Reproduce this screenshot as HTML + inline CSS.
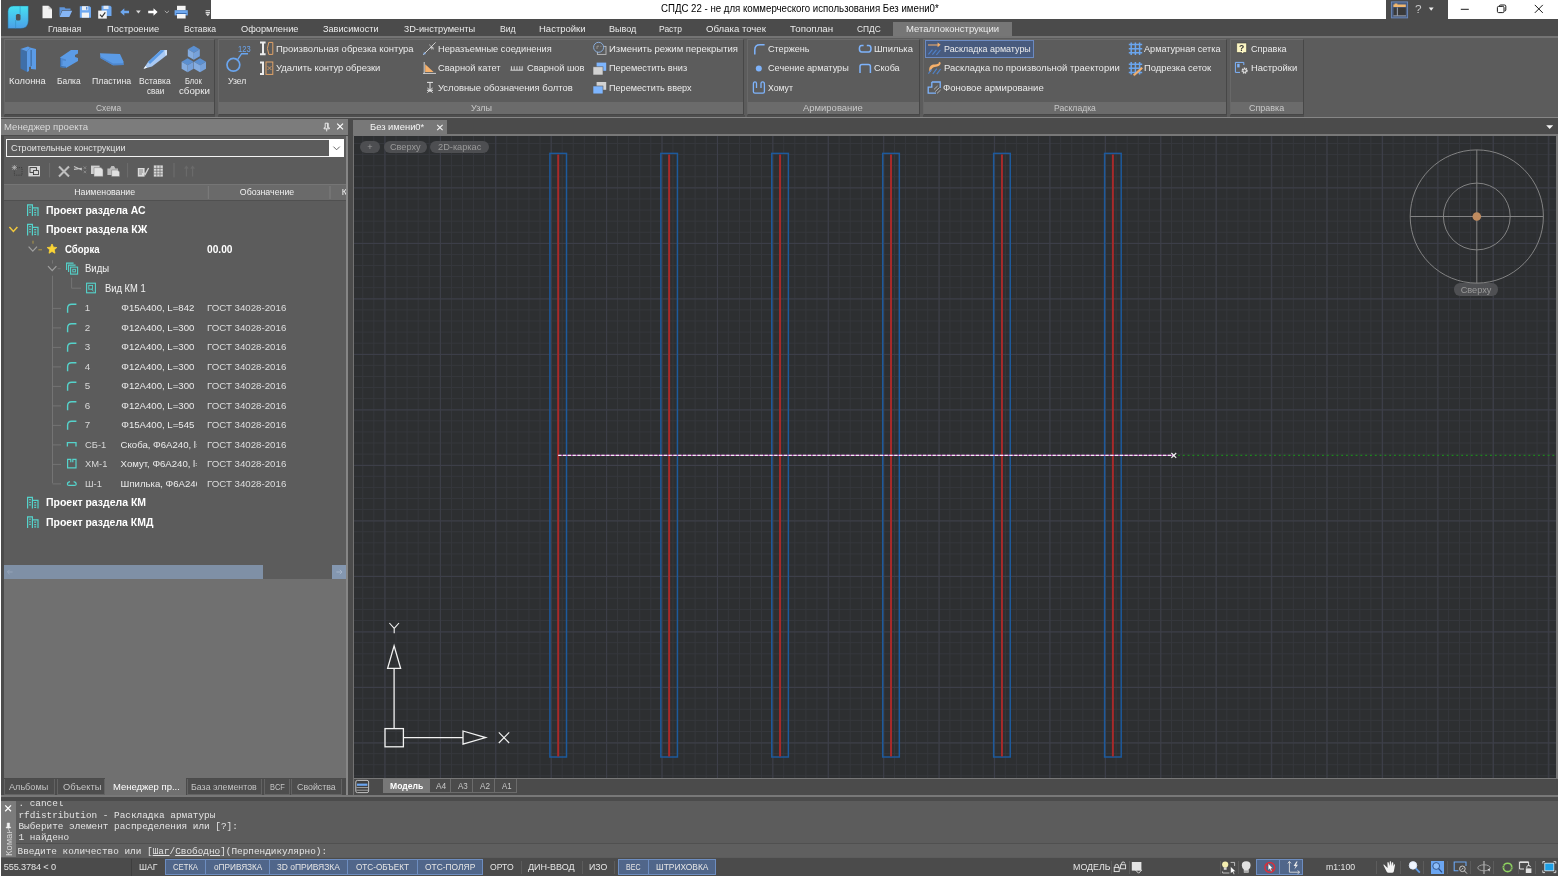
<!DOCTYPE html><html><head><meta charset="utf-8"><title>СПДС 22</title><style>
*{box-sizing:border-box;margin:0;padding:0}
html,body{width:1560px;height:877px;overflow:hidden;background:#fff}
body{position:relative;font-family:"Liberation Sans",sans-serif;font-size:9.5px;color:#e6e6e6}
.a{position:absolute}
.t{position:absolute;white-space:pre;line-height:12px;height:12px}
.c{text-align:center}
.rb{color:#e8e8e8;font-size:9.5px}
.pl{color:#b9b9b9;font-size:9.5px}
.tr{color:#ececec;font-size:9.7px}
.trb{color:#fff;font-size:10.5px;font-weight:bold}
.mono{font-family:"Liberation Mono",monospace;font-size:9.4px;color:#e4e4e4}
.st{color:#e8e8e8;font-size:9.2px}
svg{position:absolute;overflow:visible}
</style></head><body><div id="app" style="position:absolute;left:0;top:0;width:1560px;height:877px;will-change:transform;"><div class="a" style="left:1px;top:0px;width:1557px;height:876px;background:#4b4b4b;"></div>
<div class="a" style="left:211.2px;top:0px;width:1175.1px;height:19.4px;background:#fff;"></div>
<div class="a" style="left:1447.8px;top:0px;width:112.2px;height:19.4px;background:#fff;"></div>
<div class="t " style="left:661px;top:2.5999999999999996px;color:#000;font-size:10.4px;transform-origin:0 50%;transform:scaleX(0.9296);">СПДС 22 - не для коммерческого использования Без имени0*</div>
<div class="a" style="left:893px;top:22.2px;width:119px;height:14.5px;background:#767676;"></div>
<div class="t " style="left:48.3px;top:23.3px;color:#ebebeb;font-size:9.4px;transform-origin:0 50%;transform:scaleX(0.9335);">Главная</div>
<div class="t " style="left:106.7px;top:23.3px;color:#ebebeb;font-size:9.4px;transform-origin:0 50%;transform:scaleX(0.9992);">Построение</div>
<div class="t " style="left:184px;top:23.3px;color:#ebebeb;font-size:9.4px;transform-origin:0 50%;transform:scaleX(0.9159);">Вставка</div>
<div class="t " style="left:240.7px;top:23.3px;color:#ebebeb;font-size:9.4px;transform-origin:0 50%;transform:scaleX(0.9872);">Оформление</div>
<div class="t " style="left:323.3px;top:23.3px;color:#ebebeb;font-size:9.4px;transform-origin:0 50%;transform:scaleX(0.9764);">Зависимости</div>
<div class="t " style="left:404.3px;top:23.3px;color:#ebebeb;font-size:9.4px;transform-origin:0 50%;transform:scaleX(0.9882);">3D-инструменты</div>
<div class="t " style="left:500px;top:23.3px;color:#ebebeb;font-size:9.4px;transform-origin:0 50%;transform:scaleX(0.9232);">Вид</div>
<div class="t " style="left:539px;top:23.3px;color:#ebebeb;font-size:9.4px;transform-origin:0 50%;transform:scaleX(1.0132);">Настройки</div>
<div class="t " style="left:609.3px;top:23.3px;color:#ebebeb;font-size:9.4px;transform-origin:0 50%;transform:scaleX(0.9641);">Вывод</div>
<div class="t " style="left:659.3px;top:23.3px;color:#ebebeb;font-size:9.4px;transform-origin:0 50%;transform:scaleX(0.9048);">Растр</div>
<div class="t " style="left:706px;top:23.3px;color:#ebebeb;font-size:9.4px;transform-origin:0 50%;transform:scaleX(1.0238);">Облака точек</div>
<div class="t " style="left:790px;top:23.3px;color:#ebebeb;font-size:9.4px;transform-origin:0 50%;transform:scaleX(1.0422);">Топоплан</div>
<div class="t " style="left:857.3px;top:23.3px;color:#ebebeb;font-size:9.4px;transform-origin:0 50%;transform:scaleX(0.8877);">СПДС</div>
<div class="t " style="left:905.7px;top:23.3px;color:#ebebeb;font-size:9.4px;transform-origin:0 50%;transform:scaleX(1.0136);">Металлоконструкции</div>
<div class="a" style="left:1px;top:35.7px;width:1557px;height:2.3px;background:#747474;"></div>
<div class="a" style="left:1px;top:38px;width:1557px;height:78.7px;background:#5c5c5c;"></div>
<div class="a" style="left:3.5px;top:114.6px;width:211.6px;height:2.1px;background:#4e4e4e;"></div>
<div class="a" style="left:3.5px;top:39px;width:211.0px;height:75.6px;background:#5c5c5c;border:1px solid;border-color:#6b6b6b #474747 #474747 #686868;"></div>
<div class="a" style="left:4.5px;top:102px;width:209.0px;height:11.6px;background:#6b6b6b;"></div>
<div class="t " style="left:96.2px;top:102.3px;color:#c8c8c8;font-size:9.4px;transform-origin:0 50%;transform:scaleX(0.8940);">Схема</div>
<div class="a" style="left:217.5px;top:114.6px;width:527.1px;height:2.1px;background:#4e4e4e;"></div>
<div class="a" style="left:217.5px;top:39px;width:526.5px;height:75.6px;background:#5c5c5c;border:1px solid;border-color:#6b6b6b #474747 #474747 #686868;"></div>
<div class="a" style="left:218.5px;top:102px;width:524.5px;height:11.6px;background:#6b6b6b;"></div>
<div class="t " style="left:470.7px;top:102.3px;color:#c8c8c8;font-size:9.4px;transform-origin:0 50%;transform:scaleX(0.9594);">Узлы</div>
<div class="a" style="left:747px;top:114.6px;width:173.1px;height:2.1px;background:#4e4e4e;"></div>
<div class="a" style="left:747px;top:39px;width:172.5px;height:75.6px;background:#5c5c5c;border:1px solid;border-color:#6b6b6b #474747 #474747 #686868;"></div>
<div class="a" style="left:748px;top:102px;width:170.5px;height:11.6px;background:#6b6b6b;"></div>
<div class="t " style="left:803.3px;top:102.3px;color:#c8c8c8;font-size:9.4px;transform-origin:0 50%;transform:scaleX(1.0092);">Армирование</div>
<div class="a" style="left:922.5px;top:114.6px;width:304.6px;height:2.1px;background:#4e4e4e;"></div>
<div class="a" style="left:922.5px;top:39px;width:304.0px;height:75.6px;background:#5c5c5c;border:1px solid;border-color:#6b6b6b #474747 #474747 #686868;"></div>
<div class="a" style="left:923.5px;top:102px;width:302.0px;height:11.6px;background:#6b6b6b;"></div>
<div class="t " style="left:1054px;top:102.3px;color:#c8c8c8;font-size:9.4px;transform-origin:0 50%;transform:scaleX(0.9160);">Раскладка</div>
<div class="a" style="left:1229.5px;top:114.6px;width:74.6px;height:2.1px;background:#4e4e4e;"></div>
<div class="a" style="left:1229.5px;top:39px;width:74.0px;height:75.6px;background:#5c5c5c;border:1px solid;border-color:#6b6b6b #474747 #474747 #686868;"></div>
<div class="a" style="left:1230.5px;top:102px;width:72.0px;height:11.6px;background:#6b6b6b;"></div>
<div class="t " style="left:1249px;top:102.3px;color:#c8c8c8;font-size:9.4px;transform-origin:0 50%;transform:scaleX(0.9573);">Справка</div>
<div class="a" style="left:1px;top:116.7px;width:1557px;height:1.5px;background:#868686;"></div>
<div class="t " style="left:9.3px;top:74.6px;color:#ebebeb;font-size:9.4px;transform-origin:0 50%;transform:scaleX(0.9939);">Колонна</div>
<div class="t " style="left:57.3px;top:74.6px;color:#ebebeb;font-size:9.4px;transform-origin:0 50%;transform:scaleX(0.8968);">Балка</div>
<div class="t " style="left:91.7px;top:74.6px;color:#ebebeb;font-size:9.4px;transform-origin:0 50%;transform:scaleX(0.9325);">Пластина</div>
<div class="t " style="left:139.3px;top:74.6px;color:#ebebeb;font-size:9.4px;transform-origin:0 50%;transform:scaleX(0.9073);">Вставка</div>
<div class="t " style="left:185px;top:74.6px;color:#ebebeb;font-size:9.4px;transform-origin:0 50%;transform:scaleX(0.7955);">Блок</div>
<div class="t " style="left:146.7px;top:85px;color:#ebebeb;font-size:9.4px;transform-origin:0 50%;transform:scaleX(0.8621);">сваи</div>
<div class="t " style="left:179px;top:85px;color:#ebebeb;font-size:9.4px;transform-origin:0 50%;transform:scaleX(1.0367);">сборки</div>
<div class="t " style="left:227.7px;top:74.6px;color:#ebebeb;font-size:9.4px;transform-origin:0 50%;transform:scaleX(0.9128);">Узел</div>
<div class="t " style="left:237.7px;top:43.2px;color:#6aa5ee;font-size:8.6px;transform-origin:0 50%;transform:scaleX(0.8781);">123</div>
<div class="a" style="left:925.2px;top:40.2px;width:108.8px;height:17.6px;background:#485b7e;border:1px solid #6b8ac2;"></div>
<div class="t " style="left:275.7px;top:42.6px;color:#ebebeb;font-size:9.4px;transform-origin:0 50%;transform:scaleX(1.0094);">Произвольная обрезка контура</div>
<div class="t " style="left:275.7px;top:62.2px;color:#ebebeb;font-size:9.4px;transform-origin:0 50%;transform:scaleX(1.0008);">Удалить контур обрезки</div>
<div class="t " style="left:438.3px;top:42.6px;color:#ebebeb;font-size:9.4px;transform-origin:0 50%;transform:scaleX(0.9865);">Неразъемные соединения</div>
<div class="t " style="left:438.3px;top:62.2px;color:#ebebeb;font-size:9.4px;transform-origin:0 50%;transform:scaleX(0.9925);">Сварной катет</div>
<div class="t " style="left:526.7px;top:62.2px;color:#ebebeb;font-size:9.4px;transform-origin:0 50%;transform:scaleX(0.9901);">Сварной шов</div>
<div class="t " style="left:438.3px;top:81.9px;color:#ebebeb;font-size:9.4px;transform-origin:0 50%;transform:scaleX(1.0039);">Условные обозначения болтов</div>
<div class="t " style="left:609px;top:42.6px;color:#ebebeb;font-size:9.4px;transform-origin:0 50%;transform:scaleX(1.0142);">Изменить режим перекрытия</div>
<div class="t " style="left:609px;top:62.2px;color:#ebebeb;font-size:9.4px;transform-origin:0 50%;transform:scaleX(0.9794);">Переместить вниз</div>
<div class="t " style="left:609px;top:81.9px;color:#ebebeb;font-size:9.4px;transform-origin:0 50%;transform:scaleX(0.9714);">Переместить вверх</div>
<div class="t " style="left:768.3px;top:42.6px;color:#ebebeb;font-size:9.4px;transform-origin:0 50%;transform:scaleX(0.9686);">Стержень</div>
<div class="t " style="left:768.3px;top:62.2px;color:#ebebeb;font-size:9.4px;transform-origin:0 50%;transform:scaleX(0.9754);">Сечение арматуры</div>
<div class="t " style="left:767.7px;top:81.9px;color:#ebebeb;font-size:9.4px;transform-origin:0 50%;transform:scaleX(0.9271);">Хомут</div>
<div class="t " style="left:874.3px;top:42.6px;color:#ebebeb;font-size:9.4px;transform-origin:0 50%;transform:scaleX(1.0030);">Шпилька</div>
<div class="t " style="left:874.3px;top:62.2px;color:#ebebeb;font-size:9.4px;transform-origin:0 50%;transform:scaleX(0.9651);">Скоба</div>
<div class="t " style="left:943.8px;top:42.6px;color:#ebebeb;font-size:9.4px;transform-origin:0 50%;transform:scaleX(0.9520);">Раскладка арматуры</div>
<div class="t " style="left:943.8px;top:62.2px;color:#ebebeb;font-size:9.4px;transform-origin:0 50%;transform:scaleX(1.0101);">Раскладка по произвольной траектории</div>
<div class="t " style="left:943px;top:81.9px;color:#ebebeb;font-size:9.4px;transform-origin:0 50%;transform:scaleX(1.0186);">Фоновое армирование</div>
<div class="t " style="left:1144.3px;top:42.6px;color:#ebebeb;font-size:9.4px;transform-origin:0 50%;transform:scaleX(0.9733);">Арматурная сетка</div>
<div class="t " style="left:1144.3px;top:62.2px;color:#ebebeb;font-size:9.4px;transform-origin:0 50%;transform:scaleX(1.0039);">Подрезка сеток</div>
<div class="t " style="left:1251px;top:42.6px;color:#ebebeb;font-size:9.4px;transform-origin:0 50%;transform:scaleX(0.9681);">Справка</div>
<div class="t " style="left:1251px;top:62.2px;color:#ebebeb;font-size:9.4px;transform-origin:0 50%;transform:scaleX(1.0045);">Настройки</div>
<div class="a" style="left:1px;top:118.2px;width:347px;height:678.8px;background:#4b4b4b;"></div>
<div class="a" style="left:1.2px;top:119px;width:346.6px;height:16.4px;background:#7c7c7c;"></div>
<div class="t " style="left:4.1px;top:120.8px;color:#dadada;font-size:9.6px;transform-origin:0 50%;transform:scaleX(0.9977);">Менеджер проекта</div>
<div class="a" style="left:3.5px;top:135.5px;width:343px;height:444px;background:#5c5c5c;"></div>
<div class="a" style="left:346.3px;top:135.5px;width:1.5px;height:661px;background:#868686;"></div>
<div class="a" style="left:5.8px;top:139px;width:338px;height:17.6px;background:#5c5c5c;border:1px solid #f4f4f4;"></div>
<div class="a" style="left:329px;top:139px;width:14.8px;height:17.6px;background:#fff;"></div>
<div class="t " style="left:11px;top:141.8px;color:#e4e4e4;font-size:9px">Строительные конструкции</div>
<div class="a" style="left:3.5px;top:184px;width:342.8px;height:17.4px;background:#6a6a6a;border-top:1px solid #757575;border-bottom:1px solid #505050;"></div>
<div class="t c " style="left:4.700000000000003px;width:200px;top:185.8px;color:#f0f0f0;font-size:8.8px">Наименование</div>
<div class="t c " style="left:167px;width:200px;top:185.8px;color:#f0f0f0;font-size:8.8px">Обозначение</div>
<div class="a" style="left:330px;top:185px;width:16px;height:14px;overflow:hidden"><div class="t" style="left:11.8px;top:0.8px;color:#f0f0f0;font-size:8.8px">К</div></div>
<div class="t " style="left:45.7px;top:204.5px;color:#fff;font-size:10.4px;font-weight:bold;transform-origin:0 50%;transform:scaleX(1.0069);">Проект раздела АС</div>
<div class="t " style="left:45.7px;top:224.0px;color:#fff;font-size:10.4px;font-weight:bold;transform-origin:0 50%;transform:scaleX(1.0140);">Проект раздела КЖ</div>
<div class="t " style="left:45.7px;top:497.0px;color:#fff;font-size:10.4px;font-weight:bold;transform-origin:0 50%;transform:scaleX(1.0084);">Проект раздела КМ</div>
<div class="t " style="left:45.7px;top:516.5px;color:#fff;font-size:10.4px;font-weight:bold;transform-origin:0 50%;transform:scaleX(1.0078);">Проект раздела КМД</div>
<div class="t " style="left:65.2px;top:243.5px;color:#fff;font-size:10.2px;font-weight:bold;transform-origin:0 50%;transform:scaleX(0.9410);">Сборка</div>
<div class="t " style="left:206.5px;top:243.5px;color:#fff;font-size:10.2px;font-weight:bold;transform-origin:0 50%;transform:scaleX(0.9990);">00.00</div>
<div class="t " style="left:85px;top:263.2px;color:#f2f2f2;font-size:10px;transform-origin:0 50%;transform:scaleX(0.9494);">Виды</div>
<div class="t " style="left:104.7px;top:282.7px;color:#f2f2f2;font-size:10px;transform-origin:0 50%;transform:scaleX(0.9385);">Вид КМ 1</div>
<div class="t tr" style="left:84.8px;top:302.4px;color:#d8d8d8;font-size:9.8px">1</div>
<div class="a" style="left:120px;top:300.7px;width:76.6px;height:14px;overflow:hidden"><div class="t tr" style="left:1.3px;top:1.7px;font-size:9.6px">Φ15А400, L=842</div></div>
<div class="t " style="left:206.5px;top:302.4px;color:#dedede;font-size:9.8px;transform-origin:0 50%;transform:scaleX(0.9893);">ГОСТ 34028-2016</div>
<div class="t tr" style="left:84.8px;top:321.9px;color:#d8d8d8;font-size:9.8px">2</div>
<div class="a" style="left:120px;top:320.2px;width:76.6px;height:14px;overflow:hidden"><div class="t tr" style="left:1.3px;top:1.7px;font-size:9.6px">Φ12А400, L=300</div></div>
<div class="t " style="left:206.5px;top:321.9px;color:#dedede;font-size:9.8px;transform-origin:0 50%;transform:scaleX(0.9893);">ГОСТ 34028-2016</div>
<div class="t tr" style="left:84.8px;top:341.4px;color:#d8d8d8;font-size:9.8px">3</div>
<div class="a" style="left:120px;top:339.7px;width:76.6px;height:14px;overflow:hidden"><div class="t tr" style="left:1.3px;top:1.7px;font-size:9.6px">Φ12А400, L=300</div></div>
<div class="t " style="left:206.5px;top:341.4px;color:#dedede;font-size:9.8px;transform-origin:0 50%;transform:scaleX(0.9893);">ГОСТ 34028-2016</div>
<div class="t tr" style="left:84.8px;top:360.9px;color:#d8d8d8;font-size:9.8px">4</div>
<div class="a" style="left:120px;top:359.2px;width:76.6px;height:14px;overflow:hidden"><div class="t tr" style="left:1.3px;top:1.7px;font-size:9.6px">Φ12А400, L=300</div></div>
<div class="t " style="left:206.5px;top:360.9px;color:#dedede;font-size:9.8px;transform-origin:0 50%;transform:scaleX(0.9893);">ГОСТ 34028-2016</div>
<div class="t tr" style="left:84.8px;top:380.4px;color:#d8d8d8;font-size:9.8px">5</div>
<div class="a" style="left:120px;top:378.7px;width:76.6px;height:14px;overflow:hidden"><div class="t tr" style="left:1.3px;top:1.7px;font-size:9.6px">Φ12А400, L=300</div></div>
<div class="t " style="left:206.5px;top:380.4px;color:#dedede;font-size:9.8px;transform-origin:0 50%;transform:scaleX(0.9893);">ГОСТ 34028-2016</div>
<div class="t tr" style="left:84.8px;top:399.9px;color:#d8d8d8;font-size:9.8px">6</div>
<div class="a" style="left:120px;top:398.2px;width:76.6px;height:14px;overflow:hidden"><div class="t tr" style="left:1.3px;top:1.7px;font-size:9.6px">Φ12А400, L=300</div></div>
<div class="t " style="left:206.5px;top:399.9px;color:#dedede;font-size:9.8px;transform-origin:0 50%;transform:scaleX(0.9893);">ГОСТ 34028-2016</div>
<div class="t tr" style="left:84.8px;top:419.4px;color:#d8d8d8;font-size:9.8px">7</div>
<div class="a" style="left:120px;top:417.7px;width:76.6px;height:14px;overflow:hidden"><div class="t tr" style="left:1.3px;top:1.7px;font-size:9.6px">Φ15А400, L=545</div></div>
<div class="t " style="left:206.5px;top:419.4px;color:#dedede;font-size:9.8px;transform-origin:0 50%;transform:scaleX(0.9893);">ГОСТ 34028-2016</div>
<div class="t " style="left:84.8px;top:438.9px;color:#d8d8d8;font-size:9.8px;transform-origin:0 50%;transform:scaleX(0.9585);">СБ-1</div>
<div class="a" style="left:120px;top:437.2px;width:76.6px;height:14px;overflow:hidden"><div class="t tr" style="left:0.6px;top:1.7px;font-size:9.6px">Скоба, Φ6А240, l=500</div></div>
<div class="t " style="left:206.5px;top:438.9px;color:#dedede;font-size:9.8px;transform-origin:0 50%;transform:scaleX(0.9893);">ГОСТ 34028-2016</div>
<div class="t " style="left:84.8px;top:458.4px;color:#d8d8d8;font-size:9.8px;transform-origin:0 50%;transform:scaleX(0.9566);">ХМ-1</div>
<div class="a" style="left:120px;top:456.7px;width:76.6px;height:14px;overflow:hidden"><div class="t tr" style="left:0.6px;top:1.7px;font-size:9.6px">Хомут, Φ6А240, l=700</div></div>
<div class="t " style="left:206.5px;top:458.4px;color:#dedede;font-size:9.8px;transform-origin:0 50%;transform:scaleX(0.9893);">ГОСТ 34028-2016</div>
<div class="t " style="left:84.8px;top:477.9px;color:#d8d8d8;font-size:9.8px;transform-origin:0 50%;transform:scaleX(0.9550);">Ш-1</div>
<div class="a" style="left:120px;top:476.2px;width:76.6px;height:14px;overflow:hidden"><div class="t tr" style="left:0.6px;top:1.7px;font-size:9.6px">Шпилька, Φ6А240</div></div>
<div class="t " style="left:206.5px;top:477.9px;color:#dedede;font-size:9.8px;transform-origin:0 50%;transform:scaleX(0.9893);">ГОСТ 34028-2016</div>
<div class="a" style="left:3.5px;top:565.2px;width:259.5px;height:13.4px;background:#7f90a6;"></div>
<div class="a" style="left:332px;top:565.2px;width:14.3px;height:13.4px;background:#8497b0;"></div>
<div class="a" style="left:3.5px;top:579.3px;width:342.8px;height:198.5px;background:#707070;"></div>
<div class="a" style="left:3.8px;top:778.8px;width:51.6px;height:16.2px;background:#4d4d4d;border:1px solid #636363;border-top:none;"></div>
<div class="t " style="left:9.3px;top:781.4px;color:#c4c4c4;font-size:9.3px;transform-origin:0 50%;transform:scaleX(0.9787);">Альбомы</div>
<div class="a" style="left:57px;top:778.8px;width:47.5px;height:16.2px;background:#4d4d4d;border:1px solid #636363;border-top:none;"></div>
<div class="t " style="left:63px;top:781.4px;color:#c4c4c4;font-size:9.3px;transform-origin:0 50%;transform:scaleX(1.0012);">Объекты</div>
<div class="a" style="left:104.5px;top:778px;width:81.0px;height:17.5px;background:#707070;"></div>
<div class="t " style="left:112.5px;top:781.4px;color:#fff;font-size:9.3px;transform-origin:0 50%;transform:scaleX(1.0173);">Менеджер пр...</div>
<div class="a" style="left:186.6px;top:778.8px;width:75.4px;height:16.2px;background:#4d4d4d;border:1px solid #636363;border-top:none;"></div>
<div class="t " style="left:191.4px;top:781.4px;color:#c4c4c4;font-size:9.3px;transform-origin:0 50%;transform:scaleX(0.9495);">База элементов</div>
<div class="a" style="left:263.5px;top:778.8px;width:26.19999999999999px;height:16.2px;background:#4d4d4d;border:1px solid #636363;border-top:none;"></div>
<div class="t " style="left:270px;top:781.4px;color:#c4c4c4;font-size:9.3px;transform-origin:0 50%;transform:scaleX(0.8010);">BCF</div>
<div class="a" style="left:291.2px;top:778.8px;width:51.30000000000001px;height:16.2px;background:#4d4d4d;border:1px solid #636363;border-top:none;"></div>
<div class="t " style="left:297px;top:781.4px;color:#c4c4c4;font-size:9.3px;transform-origin:0 50%;transform:scaleX(0.9501);">Свойства</div>
<div class="a" style="left:347.8px;top:118.2px;width:1210.2px;height:16.8px;background:#4b4b4b;"></div>
<div class="a" style="left:352.8px;top:120px;width:94.4px;height:14.6px;background:#787878;"></div>
<div class="t " style="left:370px;top:121.4px;color:#f4f4f4;font-size:9.4px">Без имени0*</div>
<div class="a" style="left:352.6px;top:134.2px;width:1205.4px;height:645px;background:#787878;"></div>
<div class="a" style="left:354px;top:136.1px;width:1202.4px;height:641.6px;background-color:#2d2f31;background-image:linear-gradient(90deg,#3d3f49 0,#3d3f49 1px,transparent 1px),linear-gradient(180deg,#3d3f49 0,#3d3f49 1px,transparent 1px),linear-gradient(90deg,#35373c 0,#35373c 1px,transparent 1px),linear-gradient(180deg,#35373c 0,#35373c 1px,transparent 1px);background-size:55.43px 55.53px,55.43px 55.53px,11.086px 11.106px,11.086px 11.106px;background-position:30.46px 0,0 51.400000000000006px,30.46px 0,0 51.400000000000006px;"></div>
<div class="a" style="left:359.9px;top:140.6px;width:20.100000000000023px;height:12.4px;background:#4d4e51;border-radius:6.2px;"></div>
<div class="t c " style="left:269.95px;width:200px;top:140.8px;color:#9a9a9a;font-size:9.2px">+</div>
<div class="a" style="left:383.5px;top:140.6px;width:43.5px;height:12.4px;background:#4d4e51;border-radius:6.2px;"></div>
<div class="t c " style="left:305.25px;width:200px;top:140.8px;color:#9a9a9a;font-size:9.2px">Сверху</div>
<div class="a" style="left:430.4px;top:140.6px;width:58.60000000000002px;height:12.4px;background:#4d4e51;border-radius:6.2px;"></div>
<div class="t c " style="left:359.7px;width:200px;top:140.8px;color:#9a9a9a;font-size:9.2px">2D-каркас</div>
<div class="a" style="left:1454px;top:283.3px;width:44px;height:12.5px;background:#4f5053;border-radius:6.2px;"></div>
<div class="t c " style="left:1376px;width:200px;top:283.6px;color:#9a9a9a;font-size:9.2px">Сверху</div>
<div class="a" style="left:352.6px;top:779.2px;width:1205.4px;height:15.8px;background:#4b4b4b;"></div>
<div class="a" style="left:383.2px;top:779.2px;width:46.8px;height:14px;background:#787878;"></div>
<div class="t " style="left:389.8px;top:780.2px;color:#fff;font-size:9.6px;font-weight:bold;transform-origin:0 50%;transform:scaleX(0.8932);">Модель</div>
<div class="a" style="left:450.3px;top:779.4px;width:1px;height:13.6px;background:#6c6c6c;"></div>
<div class="t " style="left:436.3px;top:780.4px;color:#c8c8c8;font-size:9.4px;transform-origin:0 50%;transform:scaleX(0.8958);">A4</div>
<div class="a" style="left:472.2px;top:779.4px;width:1px;height:13.6px;background:#6c6c6c;"></div>
<div class="t " style="left:458.2px;top:780.4px;color:#c8c8c8;font-size:9.4px;transform-origin:0 50%;transform:scaleX(0.8523);">A3</div>
<div class="a" style="left:494.1px;top:779.4px;width:1px;height:13.6px;background:#6c6c6c;"></div>
<div class="t " style="left:480px;top:780.4px;color:#c8c8c8;font-size:9.4px;transform-origin:0 50%;transform:scaleX(0.8697);">A2</div>
<div class="a" style="left:515.5px;top:779.4px;width:1px;height:13.6px;background:#6c6c6c;"></div>
<div class="t " style="left:502px;top:780.4px;color:#c8c8c8;font-size:9.4px;transform-origin:0 50%;transform:scaleX(0.8349);">A1</div>
<div class="a" style="left:430px;top:792.2px;width:86.5px;height:1px;background:#6c6c6c;"></div>
<div class="a" style="left:352.6px;top:134.6px;width:1.4px;height:661px;background:#727272;"></div>
<div class="a" style="left:1px;top:794.8px;width:1557px;height:2px;background:#787878;"></div>
<div class="a" style="left:1px;top:797px;width:1557px;height:4px;background:#4b4b4b;"></div>
<div class="a" style="left:1px;top:800.8px;width:1557px;height:56.8px;background:#5c5c5c;"></div>
<div class="a" style="left:1.2px;top:800.8px;width:14.4px;height:56px;background:#7b7b7b;"></div>
<div class="a" style="left:15.6px;top:843.2px;width:1542.4px;height:1px;background:#505050;"></div>
<div class="a" style="left:15.6px;top:844.2px;width:1542.4px;height:13.2px;background:#5f5f5f;"></div>
<div class="a" style="left:1.2px;top:830px;width:14.4px;height:26.6px;overflow:hidden"><div class="t" style="left:1.6px;top:26.4px;height:11px;line-height:11px;transform-origin:0 0;transform:rotate(-90deg);font-size:9.4px;color:#d6d6d6">Команды</div></div>
<div class="a" style="left:16px;top:800.8px;width:600px;height:42px;overflow:hidden"><div class="t mono" style="left:2.4px;top:-3.2px">. cancel</div><div class="t mono" style="left:2.4px;top:9.2px">rfdistribution - Раскладка арматуры</div><div class="t mono" style="left:2.4px;top:20.5px">Выберите элемент распределения или [?]:</div><div class="t mono" style="left:2.4px;top:31.7px">1 найдено</div></div>
<div class="t mono" style="left:17.6px;top:846px">Введите количество или [<u>Шаг</u>/<u>Свободно</u>](Перпендикулярно):</div>
<div class="a" style="left:1px;top:857.6px;width:1557px;height:18.4px;background:#4b4b4b;"></div>
<div class="t " style="left:3.7px;top:861.4px;color:#e6e6e6;font-size:9.2px;letter-spacing:-0.134px">555.3784 &lt; 0</div>
<div class="a" style="left:131.4px;top:858.5px;width:1px;height:17px;background:#3e3e3e;"></div>
<div class="a" style="left:164.6px;top:859.4px;width:41.80000000000001px;height:15.8px;background:#50668a;border:1px solid #6d8dc0;"></div>
<div class="a" style="left:205.4px;top:859.4px;width:64.79999999999998px;height:15.8px;background:#50668a;border:1px solid #6d8dc0;"></div>
<div class="a" style="left:269.2px;top:859.4px;width:79.19999999999999px;height:15.8px;background:#50668a;border:1px solid #6d8dc0;"></div>
<div class="a" style="left:347.4px;top:859.4px;width:70.20000000000005px;height:15.8px;background:#50668a;border:1px solid #6d8dc0;"></div>
<div class="a" style="left:416.6px;top:859.4px;width:66.19999999999999px;height:15.8px;background:#50668a;border:1px solid #6d8dc0;"></div>
<div class="a" style="left:618.3px;top:859.4px;width:31.0px;height:15.8px;background:#50668a;border:1px solid #6d8dc0;"></div>
<div class="a" style="left:648.3px;top:859.4px;width:68.20000000000005px;height:15.8px;background:#50668a;border:1px solid #6d8dc0;"></div>
<div class="t " style="left:139px;top:861.4px;color:#e6e6e6;font-size:9.1px;transform-origin:0 50%;transform:scaleX(0.9567);">ШАГ</div>
<div class="t " style="left:173px;top:861.4px;color:#e6e6e6;font-size:9.1px;transform-origin:0 50%;transform:scaleX(0.8454);">СЕТКА</div>
<div class="t " style="left:213.6px;top:861.4px;color:#e6e6e6;font-size:9.1px;transform-origin:0 50%;transform:scaleX(0.9060);">оПРИВЯЗКА</div>
<div class="t " style="left:277px;top:861.4px;color:#e6e6e6;font-size:9.1px;transform-origin:0 50%;transform:scaleX(0.9322);">3D оПРИВЯЗКА</div>
<div class="t " style="left:355.5px;top:861.4px;color:#e6e6e6;font-size:9.1px;transform-origin:0 50%;transform:scaleX(0.8948);">ОТС-ОБЪЕКТ</div>
<div class="t " style="left:424.7px;top:861.4px;color:#e6e6e6;font-size:9.1px;transform-origin:0 50%;transform:scaleX(0.9251);">ОТС-ПОЛЯР</div>
<div class="t " style="left:489.7px;top:861.4px;color:#e6e6e6;font-size:9.1px;transform-origin:0 50%;transform:scaleX(0.9452);">ОРТО</div>
<div class="t " style="left:528.3px;top:861.4px;color:#e6e6e6;font-size:9.1px;transform-origin:0 50%;transform:scaleX(0.9897);">ДИН-ВВОД</div>
<div class="t " style="left:589.2px;top:861.4px;color:#e6e6e6;font-size:9.1px;transform-origin:0 50%;transform:scaleX(0.9625);">ИЗО</div>
<div class="t " style="left:626.3px;top:861.4px;color:#e6e6e6;font-size:9.1px;transform-origin:0 50%;transform:scaleX(0.7749);">ВЕС</div>
<div class="t " style="left:655.8px;top:861.4px;color:#e6e6e6;font-size:9.1px;transform-origin:0 50%;transform:scaleX(0.9244);">ШТРИХОВКА</div>
<div class="t " style="left:1073px;top:861.4px;color:#e6e6e6;font-size:9.1px;transform-origin:0 50%;transform:scaleX(0.9758);">МОДЕЛЬ</div>
<div class="t " style="left:1325.6px;top:861.4px;color:#e6e6e6;font-size:9.1px;transform-origin:0 50%;transform:scaleX(0.9587);">m1:100</div>
<div class="a" style="left:520.8px;top:860.5px;width:1px;height:13.5px;background:#5c5c5c;"></div>
<div class="a" style="left:582px;top:860.5px;width:1px;height:13.5px;background:#5c5c5c;"></div>
<div class="a" style="left:614.3px;top:860.5px;width:1px;height:13.5px;background:#5c5c5c;"></div>
<div class="a" style="left:1111.3px;top:860.5px;width:1px;height:13.5px;background:#5c5c5c;"></div>
<div class="a" style="left:1129.2px;top:860.5px;width:1px;height:13.5px;background:#5c5c5c;"></div>
<div class="a" style="left:1220.3px;top:860.5px;width:1px;height:13.5px;background:#5c5c5c;"></div>
<div class="a" style="left:1237.8px;top:860.5px;width:1px;height:13.5px;background:#5c5c5c;"></div>
<div class="a" style="left:1375.8px;top:860.5px;width:1px;height:13.5px;background:#5c5c5c;"></div>
<div class="a" style="left:1399.5px;top:860.5px;width:1px;height:13.5px;background:#5c5c5c;"></div>
<div class="a" style="left:1423.3px;top:860.5px;width:1px;height:13.5px;background:#5c5c5c;"></div>
<div class="a" style="left:1446.7px;top:860.5px;width:1px;height:13.5px;background:#5c5c5c;"></div>
<div class="a" style="left:1470.3px;top:860.5px;width:1px;height:13.5px;background:#5c5c5c;"></div>
<div class="a" style="left:1493.3px;top:860.5px;width:1px;height:13.5px;background:#5c5c5c;"></div>
<div class="a" style="left:1517.5px;top:860.5px;width:1px;height:13.5px;background:#5c5c5c;"></div>
<div class="a" style="left:1535.3px;top:860.5px;width:1px;height:13.5px;background:#5c5c5c;"></div>
<div class="a" style="left:1255.8px;top:859.2px;width:24.4px;height:16px;background:#50668a;border:1px solid #6d8dc0;"></div>
<div class="a" style="left:1279.4px;top:859.2px;width:24px;height:16px;background:#50668a;border:1px solid #6d8dc0;"></div>
<div class="a" style="left:1430.8px;top:860.6px;width:13px;height:13.4px;background:#6ba6f2;"></div><svg class="a" style="left:0;top:0" width="1560" height="877" viewBox="0 0 1560 877"><polygon points="20.5,49 27,51.5 27,72 20.5,68.5" fill="#3f6fa8"/><polygon points="20.5,49 28,46.5 30,47.5 27,51.5" fill="#5b9be6"/><polygon points="27,51.5 30,47.5 36,49 36,69.5 31,69 31,66.5 29,67 29,71 27,72" fill="#5b9be6"/><polygon points="30.5,50 31.8,50 31.8,66 30.5,66.3" fill="#3f6fa8"/>
<polygon points="60,57.5 71,50 78,50 78,53.5 75,55 75,57 78,58 78,61 66,68 60,67" fill="#5b9be6"/><polygon points="60,57.5 61.2,58 61.2,66 66,66.7 66,68 60,67" fill="#3f6fa8"/><polygon points="61.2,58 66,59.5 66,61 62.5,60.2 62.5,65 61.2,66" fill="#4e86cc"/>
<polygon points="100,53.2 120,54 123.5,61.5 123.5,65 113,65.3 100.5,58" fill="#5b9be6"/><polygon points="100.3,56.5 113,63.5 123.5,63.3 123.5,65 113,65.3 100.5,58.3" fill="#4e86cc"/>
<polygon points="143.6,68.8 148,62 161,50 167,50 167,55 152,66.5" fill="#a9c9f3"/><polygon points="148,62 161,50 164.5,50.5 150,64" fill="#5b9be6"/><polygon points="143.6,68.8 145.5,66 147,67.8" fill="#fff"/><polygon points="164.5,50.5 167,50 167,55 165.5,55.5" fill="#cfe1f8"/>
<polygon points="193.8,45.8 199.8,49.3 193.8,52.8 187.8,49.3" fill="#5b8fd0"/><polygon points="187.8,49.3 193.8,52.8 193.8,59.8 187.8,56.3" fill="#84ace0"/><polygon points="199.8,49.3 193.8,52.8 193.8,59.8 199.8,56.3" fill="#76a1da"/><polygon points="187.6,58.3 193.6,61.8 187.6,65.3 181.6,61.8" fill="#5b8fd0"/><polygon points="181.6,61.8 187.6,65.3 187.6,72.3 181.6,68.8" fill="#84ace0"/><polygon points="193.6,61.8 187.6,65.3 187.6,72.3 193.6,68.8" fill="#76a1da"/><polygon points="200,58.3 206,61.8 200,65.3 194,61.8" fill="#5b8fd0"/><polygon points="194,61.8 200,65.3 200,72.3 194,68.8" fill="#84ace0"/><polygon points="206,61.8 200,65.3 200,72.3 206,68.8" fill="#76a1da"/>
<circle cx="233.4" cy="64.8" r="6.4" fill="none" stroke="#6aa5ee" stroke-width="1.7"/><path d="M237.6,59.6 L241.6,53.7 L248,53.7" fill="none" stroke="#6aa5ee" stroke-width="1.4"/>
<defs><linearGradient id="lg" x1="0" y1="0" x2="0" y2="1"><stop offset="0" stop-color="#46e2f2"/><stop offset="1" stop-color="#4b9fe8"/></linearGradient></defs><path d="M13.6,5.9 H28.4 V20.6 Q28.4,28.6 20.4,28.6 H7.9 V11.6 Q7.9,5.9 13.6,5.9 Z" fill="url(#lg)" stroke="#2b5a78" stroke-width="0.5"/><rect x="15.9" y="14" width="4.6" height="6.5" rx="1.6" fill="#4e5356"/><path d="M20.1,6.2 V14.6 M15.6,20 V28.4" stroke="#2f8fc0" stroke-width="0.7" opacity="0.8"/>
<path d="M42.5,5.8 H48.5 L52,9.3 V18.2 H42.5 Z" fill="#f2f2f2"/><path d="M48.5,5.8 V9.3 H52 Z" fill="#c9c9c9"/>
<path d="M59.5,7.2 H64.5 L65.5,8.5 H70.5 V10.2 H62 L59.5,16.5 Z" fill="#5f94d8"/><path d="M62.3,10.8 H72.2 L69.3,16.9 H59.6 Z" fill="#86b6f5"/>
<path d="M79.8,6.2 H89.6 L91,7.6 V17.7 H79.8 Z" fill="#6ea8f0"/><rect x="82" y="6.2" width="6.2" height="4" fill="#e9eef5"/><rect x="86" y="6.8" width="1.4" height="2.8" fill="#5b8fd6"/><rect x="81.8" y="12.6" width="7.2" height="5.1" fill="#f2f2f2"/>
<path d="M101.5,5.8 H110.2 L111.5,7.1 V16 H101.5 Z" fill="#6ea8f0"/><rect x="103.5" y="5.8" width="5" height="3.2" fill="#e0e8f4"/><rect x="98.2" y="10.6" width="8.6" height="8" fill="#f4f4f4"/><path d="M100,14.6 L102,16.8 L105.3,12.4" fill="none" stroke="#333" stroke-width="1.2"/>
<path d="M120.2,12 L124.3,8.2 V10.8 H129 V13.2 H124.3 V15.8 Z" fill="#6ea8f0"/><path d="M136,10.6 H140.8 L138.4,13.4 Z" fill="#d8d8d8"/><path d="M157.6,12 L153.5,8.2 V10.8 H148.2 V13.2 H153.5 V15.8 Z" fill="#fff"/><path d="M164.8,10.8 L166.9,12.9 L169,10.8" fill="none" stroke="#aaa" stroke-width="1"/>
<rect x="177" y="5.8" width="8.6" height="4.4" fill="#f4f4f4"/><rect x="174.6" y="10.2" width="13.2" height="5.2" fill="#6ea8f0"/><rect x="177" y="14" width="8.6" height="4.5" fill="#f4f4f4"/><rect x="176" y="13" width="10.6" height="1" fill="#3d6db0"/>
<rect x="205.6" y="10.2" width="4.4" height="1" fill="#ddd"/><rect x="205.6" y="12" width="4.4" height="1" fill="#ddd"/><path d="M205.4,13.6 H210.2 L207.8,16.2 Z" fill="#ddd"/>
<rect x="1391.4" y="1.9" width="16.2" height="16" fill="#4a5d80" stroke="#6d8cc0" stroke-width="0.9"/><path d="M1393.4,4.6 H1394.6 V3.6 H1397.4 V4.6 H1405.8 V7 H1393.4 Z" fill="#f1b76e"/><rect x="1393.6" y="7.6" width="3.2" height="8" fill="#3a3a3a"/><rect x="1398" y="7.6" width="7.8" height="8" fill="#3a3a3a"/><path d="M1397.4,7.6 V15.6 M1393.4,15.8 H1406" stroke="#b8b8b8" stroke-width="0.7"/>
<text x="1418.2" y="13.4" font-family="Liberation Sans, sans-serif" font-size="11.8" fill="#c8c8c8" text-anchor="middle">?</text>
<path d="M1428.8,7.6 H1433.6 L1431.2,10.8 Z" fill="#f0f0f0"/>
<path d="M1460.8,9.3 H1468.8" stroke="#1a1a1a" stroke-width="1"/><rect x="1497.4" y="6.4" width="6.6" height="6.2" fill="none" stroke="#1a1a1a" stroke-width="1" rx="1.2"/><path d="M1499.4,6.2 Q1499.4,5 1500.6,5 H1504.6 Q1505.8,5 1505.8,6.2 V10 Q1505.8,11 1504.6,11" fill="none" stroke="#1a1a1a" stroke-width="1"/><path d="M1534.8,4.9 L1542.8,12.9 M1542.8,4.9 L1534.8,12.9" stroke="#1a1a1a" stroke-width="1"/>
<path d="M260,42.6 H265.6 M260,54.2 H265.6 M263,42.6 V54.2" stroke="#ececec" stroke-width="2" fill="none"/>
<path d="M260,62.4 H264 M260,74 H264 M263,62.4 V74" stroke="#ececec" stroke-width="2" fill="none"/>
<path d="M272.8,42.4 H268.8 Q266,48.4 268.8,54.4 H272.8 Z" fill="none" stroke="#e2a368" stroke-width="1"/>
<rect x="266" y="62" width="6.8" height="12.4" fill="none" stroke="#e2a368" stroke-width="1"/><path d="M267.6,66.2 L271.4,70 M271.4,66.2 L267.6,70" stroke="#e2a368" stroke-width="0.8"/>
<path d="M423.2,54.8 L435.6,42.4" stroke="#ddd" stroke-width="0.9"/><path d="M423.2,54.8 L424,52 L426,54 Z" fill="#8fb8ee"/><path d="M429.2,44.6 L434,49.4 M430.2,47.8 H433.6 M431.8,46 V49.6" stroke="#ddd" stroke-width="0.7"/>
<polygon points="425.2,64.2 425.2,72 433.6,72" fill="#f6b06a"/><path d="M424.2,62 V73.6 M423,73.4 H436" stroke="#ddd" stroke-width="0.9" fill="none"/>
<path d="M510.4,70.2 H522.8 M511.4,66.2 V70 M514.2,66.2 V70 M517,66.2 V70 M519.8,66.2 V70 M522.2,66.2 V70" stroke="#e4e4e4" stroke-width="0.9" fill="none"/>
<path d="M427,82.4 H433 M430,82.4 V92 M427.4,88 L432.6,92.6 M432.6,88 L427.4,92.6 M427,90.3 H433" stroke="#e4e4e4" stroke-width="1" fill="none"/>
<rect x="597.4" y="46.4" width="8.6" height="8" fill="none" stroke="#bdbdbd" stroke-width="0.9"/><circle cx="598.6" cy="47.3" r="5" fill="#5b5b5b" stroke="#8db4e6" stroke-width="0.9"/><path d="M597,49 V46.2 H599 M600.4,46.2 H601.4" stroke="#aaa" stroke-width="0.7" fill="none"/>
<rect x="596.6" y="62.6" width="9.6" height="8.2" fill="#7db5ff"/><rect x="593" y="66.8" width="10" height="8.2" fill="#d2d2d2" stroke="#5b5b5b" stroke-width="0.6"/>
<rect x="596.6" y="82" width="9.6" height="7.8" fill="#d2d2d2"/><rect x="593" y="86" width="10" height="7.9" fill="#7db5ff" stroke="#5b5b5b" stroke-width="0.6"/>
<path d="M754.8,54.6 V50 Q754.8,44.8 760,44.8 H764.6" fill="none" stroke="#7eb3fb" stroke-width="1.5"/>
<circle cx="758.8" cy="68.4" r="3" fill="#7eb3fb"/>
<path d="M756.5,88 V83.6 Q756.5,81.9 755,81.9 Q753.4,81.9 753.4,84 V91.8 Q753.4,93.2 755,93.2 H763 Q764.4,93.2 764.4,91.8 V84 Q764.4,81.9 762.6,81.9 Q761,81.9 761,83.6 V88" fill="none" stroke="#7eb3fb" stroke-width="1.3"/>
<path d="M863.6,45.6 H861.6 Q859.4,45.6 859.4,48.8 Q859.4,52 861.6,52 H868.8 Q871,52 871,48.8 Q871,45.6 868.8,45.6 H866.8" fill="none" stroke="#7eb3fb" stroke-width="1.5"/>
<path d="M860,73 V66.4 Q860,64.4 862,64.4 H868.4 Q870.4,64.4 870.4,66.4 V73" fill="none" stroke="#7eb3fb" stroke-width="1.5"/>
<path d="M928,44.6 H937.6 V42.4 L940.6,44.8 L937.6,47.2 V45.6 H928 Z" fill="#f6b06a"/><path d="M928.4,54.4 L932.4,49.6 M932.4,54.6 L936.4,49.8 M936.4,54.8 L940.4,50" stroke="#4f82c9" stroke-width="1.1"/>
<path d="M929.4,72 Q928,66 933,64.4 Q936,65 938.6,63.4 L939,61.8 L940.8,62.8 Q940.4,66.6 934.6,67 Q931.4,67.6 930.8,72 Z" fill="#f6b06a"/><path d="M928.4,73.6 L931.6,69.4 M932.8,74 L936.8,68.6 M936.8,74.2 L940.6,69" stroke="#4f82c9" stroke-width="1.2"/>
<path d="M931.8,82 H940.2 V88 M936,93.2 H928.2 V87.2 H931.8 V82" fill="none" stroke="#7eb3fb" stroke-width="1.3"/><path d="M934,89.4 L937.6,86 M935.2,91.6 L939.4,87.6 M937,93.4 L940.6,90" stroke="#b5b5b5" stroke-width="1"/>
<path d="M1131.2,42.4 V55.0 M1135.4,42.4 V55.0 M1139.6000000000001,42.4 V55.0 M1128.8,44.6 H1142.2 M1128.8,48.7 H1142.2 M1128.8,52.8 H1142.2 " stroke="#6aa5ee" stroke-width="1.5" fill="none"/>
<path d="M1131.2,62 V74.6 M1135.4,62 V74.6 M1139.6000000000001,62 V74.6 M1128.8,64.2 H1142.2 M1128.8,68.3 H1142.2 M1128.8,72.4 H1142.2 " stroke="#6aa5ee" stroke-width="1.5" fill="none"/>
<path d="M1133.4,74.8 L1141.6,67.4 L1142.4,68.6 L1134.6,75.6 Z" fill="#f6b06a" stroke="#f6b06a" stroke-width="0.8"/>
<path d="M1236.6,43 H1246.6 V52.6 H1243.6 L1242.6,53.8 L1241.6,52.6 H1236.6 Z" fill="#fbf5c3" stroke="#3a3a3a" stroke-width="0.6"/>
<text x="1241.6" y="51" font-family="Liberation Sans, sans-serif" font-size="8.6" font-weight="bold" fill="#333" text-anchor="middle">?</text>
<path d="M1243.8,65 V62.4 H1235.4 V72.4 H1240" fill="none" stroke="#7eb3fb" stroke-width="1"/><rect x="1237.2" y="63.8" width="2.4" height="3.6" fill="#7eb3fb"/><circle cx="1244.6" cy="70.6" r="2.3" fill="none" stroke="#e2e2e2" stroke-width="1.6" stroke-dasharray="1.2 0.6"/><circle cx="1244.6" cy="70.6" r="1.6" fill="none" stroke="#e2e2e2" stroke-width="0.9"/>
<path d="M325.2,123.2 H328.2 V127.8 H329.4 V128.8 H324 V127.8 H325.2 Z" fill="#7c7c7c" stroke="#f2f2f2" stroke-width="0.9"/><path d="M326.7,128.8 V131.4 M327.6,123.4 V127.8" stroke="#f2f2f2" stroke-width="0.9"/>
<path d="M337.2,123.6 L343,129.4 M343,123.6 L337.2,129.4" stroke="#fff" stroke-width="1.2"/>
<path d="M333.4,146.6 L336.6,149.8 L339.8,146.6" fill="none" stroke="#555" stroke-width="0.9"/>
<rect x="14.4" y="167.6" width="7.6" height="7.6" fill="none" stroke="#3c3c3c" stroke-width="0.9" stroke-dasharray="1.2 1"/><path d="M12.4,165.6 L16.4,169.6 M16.4,165.6 L12.4,169.6 M14.4,165 V170.2 M11.8,167.6 H17" stroke="#bdbdbd" stroke-width="0.7"/>
<rect x="28.4" y="166" width="11.6" height="10.4" fill="#d6d6d6"/><rect x="30" y="167.6" width="6.4" height="4.8" fill="none" stroke="#333" stroke-width="0.9"/><rect x="33.4" y="170.6" width="5" height="4" fill="#d6d6d6" stroke="#333" stroke-width="0.8"/>
<path d="M49.6,163 V177.4 M127.6,163 V177.4 M174,163 V177.4" stroke="#6e6e6e" stroke-width="1"/>
<path d="M59,166.4 L69,176.4 M69,166.4 L59,176.4" stroke="#bfbfbf" stroke-width="2.1"/>
<path d="M74,166.6 L82,170 M74,169.4 L82,168.2" stroke="#c4c4c4" stroke-width="1.1"/><path d="M83.6,166.4 L86.2,169 M86.2,166.4 L83.6,169 M83.6,170.6 L86.2,173.2 M86.2,170.6 L83.6,173.2" stroke="#999" stroke-width="0.7"/>
<rect x="91" y="165.6" width="8.6" height="8.4" fill="#cfcfcf"/><path d="M94,167.6 H101 L103,169.6 V176.4 H94 Z" fill="#e2e2e2" stroke="#777" stroke-width="0.5"/>
<path d="M107.4,168.4 H110 L111.4,166 H114 L115.4,168.4 H118 V175 H107.4 Z" fill="#bdbdbd"/><path d="M111.6,170 H117.6 L119.6,172 V176.6 H111.6 Z" fill="#e0e0e0" stroke="#777" stroke-width="0.5"/>
<rect x="137.8" y="168" width="6.8" height="8.6" fill="#dcdcdc"/><path d="M139,170 H143 M139,172 H143 M139,174 H142" stroke="#666" stroke-width="0.7"/><path d="M143.4,172.6 L145.2,174.4 L148.6,168" stroke="#d0d0d0" stroke-width="1.4" fill="none"/>
<rect x="153.8" y="165.4" width="9" height="11.2" fill="#d8d8d8"/><path d="M156.8,165.4 V176.6 M160,165.4 V176.6 M153.8,168.4 H162.8 M153.8,171.2 H162.8 M153.8,174 H162.8" stroke="#666" stroke-width="0.7"/>
<path d="M186.4,167 V176.6 M192.6,167 V176.6 M184.6,168.6 L186.4,166.4 L188.2,168.6 M190.8,168.6 L192.6,166.4 L194.4,168.6" stroke="#6a6a6a" stroke-width="1.2" fill="none"/>
<path d="M208.3,186 V199 M330,186 V199" stroke="#7e7e7e" stroke-width="1"/>
<path d="M27.6,216.0 V204.79999999999998 H32.4 V216.0 M32.4,207.79999999999998 H38 V216.0" fill="none" stroke="#55d3cb" stroke-width="1.2"/><path d="M29.2,207.2 H30.8 M29.2,209.79999999999998 H30.8 M29.2,212.39999999999998 H30.8 M34.2,210.2 H36.2 M34.2,212.6 H36.2 M34.2,214.79999999999998 H36.2" stroke="#55d3cb" stroke-width="1.2"/>
<path d="M27.6,235.5 V224.29999999999998 H32.4 V235.5 M32.4,227.29999999999998 H38 V235.5" fill="none" stroke="#55d3cb" stroke-width="1.2"/><path d="M29.2,226.7 H30.8 M29.2,229.29999999999998 H30.8 M29.2,231.89999999999998 H30.8 M34.2,229.7 H36.2 M34.2,232.1 H36.2 M34.2,234.29999999999998 H36.2" stroke="#55d3cb" stroke-width="1.2"/>
<path d="M27.6,508.5 V497.3 H32.4 V508.5 M32.4,500.3 H38 V508.5" fill="none" stroke="#55d3cb" stroke-width="1.2"/><path d="M29.2,499.7 H30.8 M29.2,502.3 H30.8 M29.2,504.9 H30.8 M34.2,502.7 H36.2 M34.2,505.09999999999997 H36.2 M34.2,507.3 H36.2" stroke="#55d3cb" stroke-width="1.2"/>
<path d="M27.6,528.0 V516.8000000000001 H32.4 V528.0 M32.4,519.8000000000001 H38 V528.0" fill="none" stroke="#55d3cb" stroke-width="1.2"/><path d="M29.2,519.2 H30.8 M29.2,521.8000000000001 H30.8 M29.2,524.4000000000001 H30.8 M34.2,522.2 H36.2 M34.2,524.6 H36.2 M34.2,526.8000000000001 H36.2" stroke="#55d3cb" stroke-width="1.2"/>
<path d="M9.4,227.1 L13.4,231.5 L17.4,227.1" fill="none" stroke="#f1c83d" stroke-width="1.5"/>
<path d="M33,240.7 V243.7" stroke="#b79e45" stroke-width="0.9"/><path d="M38.4,249.79999999999998 H42" stroke="#b79e45" stroke-width="0.9"/>
<path d="M52.5,260.2 V263.59999999999997 M52.5,275.7 V483.2 M57.6,268.7 H60.6 M71.6,277.7 V288.2 H81" fill="none" stroke="#7a7a7a" stroke-width="0.8"/>
<path d="M52.5,308.4 H61" stroke="#7a7a7a" stroke-width="0.8"/><path d="M52.5,327.9 H61" stroke="#7a7a7a" stroke-width="0.8"/><path d="M52.5,347.4 H61" stroke="#7a7a7a" stroke-width="0.8"/><path d="M52.5,366.9 H61" stroke="#7a7a7a" stroke-width="0.8"/><path d="M52.5,386.4 H61" stroke="#7a7a7a" stroke-width="0.8"/><path d="M52.5,405.9 H61" stroke="#7a7a7a" stroke-width="0.8"/><path d="M52.5,425.4 H61" stroke="#7a7a7a" stroke-width="0.8"/><path d="M52.5,444.9 H61" stroke="#7a7a7a" stroke-width="0.8"/><path d="M52.5,464.4 H61" stroke="#7a7a7a" stroke-width="0.8"/><path d="M52.5,483.9 H61" stroke="#7a7a7a" stroke-width="0.8"/>
<path d="M28.6,246.6 L32.8,251.2 L37,246.6" fill="none" stroke="#a0a0a0" stroke-width="1.2"/>
<path d="M48,266.09999999999997 L52.2,270.7 L56.4,266.09999999999997" fill="none" stroke="#a0a0a0" stroke-width="1.2"/>
<polygon points="52.00,244.00 53.41,247.16 56.85,247.52 54.28,249.84 55.00,253.23 52.00,251.50 49.00,253.23 49.72,249.84 47.15,247.52 50.59,247.16" fill="#fcd535" stroke="#fcd535" stroke-width="0.8" stroke-linejoin="round"/>
<path d="M66.6,270.09999999999997 V263.09999999999997 H73.6 M68.6,272.09999999999997 V265.09999999999997 H75.6" fill="none" stroke="#55d3cb" stroke-width="1.1"/><rect x="70.6" y="267.09999999999997" width="7" height="7" fill="none" stroke="#55d3cb" stroke-width="1.1"/><rect x="72.8" y="269.3" width="2.6" height="2.6" fill="none" stroke="#55d3cb" stroke-width="0.9"/>
<rect x="86.6" y="283.2" width="8.8" height="9.6" fill="none" stroke="#55d3cb" stroke-width="1.1"/><rect x="88.8" y="285.4" width="3.8" height="3.8" fill="none" stroke="#55d3cb" stroke-width="0.9"/><path d="M91.4,289.2 L93.6,291.2" stroke="#55d3cb" stroke-width="0.9"/>
<path d="M67.6,312.8 V308.2 Q67.6,304.2 71.6,304.2 H76.4" fill="none" stroke="#55d3cb" stroke-width="1.4"/>
<path d="M67.6,332.3 V327.7 Q67.6,323.7 71.6,323.7 H76.4" fill="none" stroke="#55d3cb" stroke-width="1.4"/>
<path d="M67.6,351.8 V347.2 Q67.6,343.2 71.6,343.2 H76.4" fill="none" stroke="#55d3cb" stroke-width="1.4"/>
<path d="M67.6,371.3 V366.7 Q67.6,362.7 71.6,362.7 H76.4" fill="none" stroke="#55d3cb" stroke-width="1.4"/>
<path d="M67.6,390.8 V386.2 Q67.6,382.2 71.6,382.2 H76.4" fill="none" stroke="#55d3cb" stroke-width="1.4"/>
<path d="M67.6,410.3 V405.7 Q67.6,401.7 71.6,401.7 H76.4" fill="none" stroke="#55d3cb" stroke-width="1.4"/>
<path d="M67.6,429.8 V425.2 Q67.6,421.2 71.6,421.2 H76.4" fill="none" stroke="#55d3cb" stroke-width="1.4"/>
<path d="M67.4,446.4 V442.59999999999997 H76 V446.4" fill="none" stroke="#55d3cb" stroke-width="1.3"/>
<path d="M70.8,462.3 V459.3 H67.6 V467.9 H76 V459.3 H72.8 V462.3" fill="none" stroke="#55d3cb" stroke-width="1.2"/>
<path d="M70,481.59999999999997 Q67.4,482.0 67.4,484.2 Q67.4,485.4 69,485.4 H74.6 Q76.2,485.4 76.2,484.2 Q76.2,482.0 73.6,481.59999999999997" fill="none" stroke="#55d3cb" stroke-width="1.2"/>
<path d="M7.6,572 H12.6 M9.6,569.8 L7.4,572 L9.6,574.2" fill="none" stroke="#97a6ba" stroke-width="0.9"/><path d="M336.4,572 H342 M339.8,569.8 L342,572 L339.8,574.2" fill="none" stroke="#a9b8cc" stroke-width="0.9"/>
<path d="M437.2,124.8 L442.6,130.2 M442.6,124.8 L437.2,130.2" stroke="#f4f4f4" stroke-width="1.1"/>
<path d="M1546.2,125.2 H1553.2 L1549.7,129 Z" fill="#f4f4f4"/>
<rect x="549.90" y="153.4" width="16.6" height="603.6" fill="none" stroke="#1d5a9c" stroke-width="1.5"/><path d="M558.20,154.4 V756.4" stroke="#a82a2a" stroke-width="2"/>
<rect x="660.84" y="153.4" width="16.6" height="603.6" fill="none" stroke="#1d5a9c" stroke-width="1.5"/><path d="M669.14,154.4 V756.4" stroke="#a82a2a" stroke-width="2"/>
<rect x="771.78" y="153.4" width="16.6" height="603.6" fill="none" stroke="#1d5a9c" stroke-width="1.5"/><path d="M780.08,154.4 V756.4" stroke="#a82a2a" stroke-width="2"/>
<rect x="882.72" y="153.4" width="16.6" height="603.6" fill="none" stroke="#1d5a9c" stroke-width="1.5"/><path d="M891.02,154.4 V756.4" stroke="#a82a2a" stroke-width="2"/>
<rect x="993.66" y="153.4" width="16.6" height="603.6" fill="none" stroke="#1d5a9c" stroke-width="1.5"/><path d="M1001.96,154.4 V756.4" stroke="#a82a2a" stroke-width="2"/>
<rect x="1104.60" y="153.4" width="16.6" height="603.6" fill="none" stroke="#1d5a9c" stroke-width="1.5"/><path d="M1112.90,154.4 V756.4" stroke="#a82a2a" stroke-width="2"/>
<path d="M558.2,455.4 H1173" stroke="#b848b8" stroke-width="1.1"/><path d="M558.2,455.4 H1173" stroke="#f2ecf2" stroke-width="1.1" stroke-dasharray="3.2 1.6"/>
<path d="M1171.4,453 L1176.2,457.8 M1176.2,453 L1171.4,457.8" stroke="#f4f4f4" stroke-width="1.1"/>
<path d="M1178,455.4 H1556" stroke="#1f841f" stroke-width="1.2" stroke-dasharray="1.9 2.9"/>
<circle cx="1476.8" cy="216.5" r="66.6" fill="none" stroke="#8c8c8c" stroke-width="0.9"/><circle cx="1476.8" cy="216.5" r="33.4" fill="none" stroke="#8c8c8c" stroke-width="0.9"/><path d="M1410.2,216.5 H1543.4 M1476.8,149.9 V283.1" stroke="#8c8c8c" stroke-width="0.9"/><circle cx="1476.8" cy="216.5" r="4.3" fill="#c08c60"/>
<g fill="none" stroke="#f2f2f2" stroke-width="1.3"><rect x="385" y="728.6" width="18.4" height="18.2"/><path d="M394.1,728.6 V668.4 M387.6,668.4 L394.1,645.8 L400.6,668.4 Z M403.4,737.6 H463 M463,731 L485.6,737.6 L463,744.2 Z"/><path d="M389.4,623 L394.2,628.4 L399,623 M394.2,628.4 V633.2" stroke-width="1.1"/><path d="M498.8,732.4 L509.2,743 M509.2,732.4 L498.8,743" stroke-width="1.1"/></g>
<rect x="355.8" y="780.4" width="12.8" height="12.2" rx="1.6" fill="#3e3e3e" stroke="#cfcfcf" stroke-width="0.9"/><rect x="357" y="783.6" width="10.4" height="2.2" fill="#6aa5f0"/><path d="M356.4,787.6 H368 M356.4,790.2 H368" stroke="#cfcfcf" stroke-width="0.7"/>
<path d="M5.2,805.4 L11,811.2 M11,805.4 L5.2,811.2" stroke="#fff" stroke-width="1.3"/>
<path d="M7.2,823 H9.6 V827 H10.6 V828 H6.2 V827 H7.2 Z M8.4,828 V830.6" fill="#f2f2f2" stroke="#f2f2f2" stroke-width="0.5"/>
<rect x="1114.2" y="867.4" width="5" height="4.2" fill="none" stroke="#e8e8e8" stroke-width="0.9"/><path d="M1115,867.4 V866 Q1115,864.4 1116.7,864.4 Q1118.4,864.4 1118.4,866 V867.4" fill="none" stroke="#e8e8e8" stroke-width="0.9"/><rect x="1120.6" y="864.8" width="5" height="4" fill="none" stroke="#e8e8e8" stroke-width="0.9"/><path d="M1121.6,864.8 V863.4 Q1121.6,862 1123.2,862 Q1124.8,862 1124.8,863.4" fill="none" stroke="#e8e8e8" stroke-width="0.9"/>
<rect x="1131.8" y="862" width="9.6" height="8.6" fill="#e4e4e4"/><path d="M1135.6,870.2 H1141.6 L1138.6,873.2 Z" fill="#4b4b4b" stroke="#e4e4e4" stroke-width="0.9"/>
<circle cx="1225.2" cy="864.6" r="3.1" fill="#f4eeb0"/><rect x="1223.8" y="867.4" width="2.8" height="2.4" fill="#d8d8d8"/><path d="M1230.6,862.4 H1234.6 V866 M1222.6,871.4 V873 H1229.4" fill="none" stroke="#d8d8d8" stroke-width="0.8"/><path d="M1230.6,866.4 V873.6 L1232.4,872 L1233.8,874.6 L1234.8,874 L1233.6,871.6 L1235.8,871.4 Z" fill="#fff" stroke="#333" stroke-width="0.4"/>
<path d="M1246.2,861.2 Q1250.6,861.2 1250.6,865.4 Q1250.6,867.4 1248.6,869.4 V872.6 H1243.8 V869.4 Q1241.8,867.4 1241.8,865.4 Q1241.8,861.2 1246.2,861.2 Z" fill="#e2e2e2"/><rect x="1244" y="870.4" width="4.4" height="2.6" fill="#a8a8a8"/>
<circle cx="1269.8" cy="867.4" r="4.9" fill="none" stroke="#d8303c" stroke-width="1.5"/><path d="M1266.4,864 L1273.2,870.8" stroke="#d8303c" stroke-width="1.4"/><path d="M1268.2,863.6 V870.2 L1269.8,868.8 L1271,871.4 L1272,870.9 L1270.9,868.5 L1272.8,868.3 Z" fill="#fff" stroke="#333" stroke-width="0.3"/>
<path d="M1289.4,861.6 V872.2 H1299.4 M1287.8,863.4 L1289.4,861.4 L1291,863.4 M1297.6,870.6 L1299.6,872.2 L1297.6,873.8" fill="none" stroke="#dcdcdc" stroke-width="0.9"/><path d="M1296.4,861.4 L1293.6,866 H1295.6 L1294.4,869.6 L1298,864.8 H1296 L1297.6,861.4 Z" fill="#e8e8e8"/>
<path d="M1386,866.4 L1384,864.6 Q1383.2,864 1383.6,865.4 L1386.6,871.6 Q1387.2,872.8 1388.6,872.8 H1392 Q1393.4,872.8 1393.8,871.4 L1395,865 Q1395,864 1394,864.4 L1393.4,866.6 L1393.2,862.6 Q1392.6,861.8 1392,862.6 L1391.6,866 L1391,861.6 Q1390.4,860.8 1389.8,861.6 L1389.6,866 L1388.6,862.4 Q1388,861.6 1387.4,862.4 L1387.6,868 Z" fill="#f4f4f4"/>
<circle cx="1413" cy="865.4" r="3.8" fill="#f0f6ff" stroke="#dfe9f7" stroke-width="0.8"/><path d="M1415.8,868.4 L1419.8,872.6" stroke="#5f9be6" stroke-width="1.8"/>
<circle cx="1436.2" cy="866" r="3.4" fill="#8dbdf8" stroke="#2c4f86" stroke-width="0.9"/><path d="M1438.6,868.6 L1442,872.4" stroke="#2c4f86" stroke-width="1.3"/>
<path d="M1466,866 V862 H1454.2 V870.8 H1458.4" fill="none" stroke="#6ba6f2" stroke-width="1.1"/><circle cx="1462.4" cy="868.8" r="2.8" fill="none" stroke="#d8d8d8" stroke-width="0.9"/><path d="M1464.4,870.8 L1467,873.6 M1461.6,869.6 L1463.4,867.8" stroke="#d8d8d8" stroke-width="0.9"/>
<ellipse cx="1484" cy="867.8" rx="6.2" ry="3" fill="none" stroke="#a9a9a9" stroke-width="0.9"/><path d="M1484,861 V874" stroke="#a9a9a9" stroke-width="1.3"/><path d="M1487.6,869.4 L1489.6,871.4 L1489.8,868.6 Z" fill="#ddd"/>
<circle cx="1507.6" cy="867.4" r="4.2" fill="none" stroke="#8fd460" stroke-width="1.6"/><path d="M1501.6,867.4 L1503.4,865.2 L1505.2,867.4 Z M1513.6,867.4 L1511.8,869.6 L1510,867.4 Z" fill="#8fd460" stroke="#4b4b4b" stroke-width="0.5"/>
<path d="M1528.6,866 V862 H1519.6 V869 H1524" fill="none" stroke="#e0e0e0" stroke-width="1"/><rect x="1519.6" y="861.6" width="9" height="1.4" fill="#e0e0e0"/><rect x="1525.8" y="868.4" width="5.6" height="4.6" fill="#e0e0e0"/><path d="M1526.8,868.4 V867 Q1526.8,865.4 1528.6,865.4 Q1530.4,865.4 1530.4,867" fill="none" stroke="#e0e0e0" stroke-width="0.9"/>
<rect x="1544.8" y="863.2" width="9" height="7.6" fill="#1ea0e6" stroke="#d8e8f4" stroke-width="0.8"/><path d="M1542.8,863.6 V861.6 H1545 M1553.6,861.6 H1555.8 V863.6 M1555.8,870.4 V872.6 H1553.6 M1545,872.6 H1542.8 V870.4" fill="none" stroke="#e0e0e0" stroke-width="0.9"/></svg></div></body></html>
